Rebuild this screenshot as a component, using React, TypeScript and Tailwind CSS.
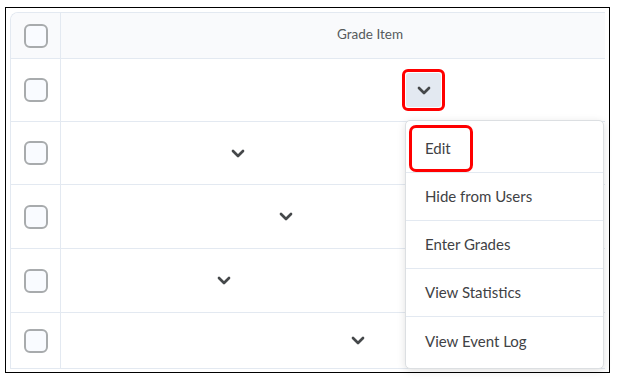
import React from "react";

const Chevron = () => (
  <svg width="14" height="9" viewBox="0 0 14 9" fill="none">
    <path d="M2 2l5 5 5-5" stroke="#45484a" strokeWidth="2.7" strokeLinecap="round" strokeLinejoin="round" />
  </svg>
);

const Checkbox = () => (
  <div className="w-[24px] h-[24px] rounded-[6px] border-2 border-[#a8abad] bg-[#f9fbff]" />
);

const rows = [
  { h: "h-[63px]", pad: "pl-[341px]", first: true },
  { h: "h-[63px]", pad: "pl-[170px]", first: false },
  { h: "h-[64px]", pad: "pl-[218px]", first: false },
  { h: "h-[64px]", pad: "pl-[156px]", first: false },
  { h: "h-[56px]", pad: "pl-[290px]", first: false },
];

const items = ["Edit", "Hide from Users", "Enter Grades", "View Statistics", "View Event Log"];

export default function App() {
  return (
    <div className="w-[617px] h-[383px] bg-white" style={{ fontFamily: "Lato, 'Open Sans', sans-serif" }}>
      <div className="relative ml-[5px] pt-[7px]">
        <div className="w-[605px] h-[366px] border border-black px-[4px] pt-[4px] overflow-hidden">
          <div className="w-[595px] border-t border-l border-[#e3e9f1] rounded-tl-[8px] overflow-hidden">
            <div className="flex h-[46px] bg-[#f9fafc] border-b border-[#e3e9f1]">
              <div className="w-[50px] flex items-center justify-center border-r border-[#e3e9f1]">
                <Checkbox />
              </div>
              <div className="flex-1 flex items-center pl-[276px] pb-[2px] text-[13.5px] text-[#565a5c]">Grade Item</div>
            </div>
            {rows.map((r, i) => (
              <div key={i} className={`flex ${r.h} border-b border-[#e3e9f1]`}>
                <div className="w-[50px] flex items-center justify-center border-r border-[#e3e9f1]">
                  <Checkbox />
                </div>
                <div className={`flex-1 flex items-center ${r.pad}`}>
                  {r.first ? (
                    <div className="w-[43px] h-[42px] border-[3px] border-[#ff0000] rounded-[6px] flex items-center justify-center">
                      <div className="w-[35px] h-[34px] bg-[#e3e9f1] rounded-[3px] flex items-center justify-center">
                        <Chevron />
                      </div>
                    </div>
                  ) : (
                    <Chevron />
                  )}
                </div>
              </div>
            ))}
          </div>
        </div>
        <div className="absolute left-[400px] top-[120px] w-[199px] h-[249px] bg-white border border-[#dcdfe2] rounded-[5px] shadow-[0_2px_8px_rgba(0,0,0,0.12)] flex flex-col pt-[4px]">
          {items.map((t, i) => (
            <div
              key={t}
              className={`h-[48px] shrink-0 flex items-center pl-[19px] text-[15px] text-[#3f4245] ${i < items.length - 1 ? "border-b border-[#e3e9f1]" : ""}`}
            >
              {i === 0 ? (
                <div className="-ml-[16px] w-[64px] h-[47px] border-[3px] border-[#ff0000] rounded-[7px] flex items-center pl-[13px]">
                  Edit
                </div>
              ) : (
                t
              )}
            </div>
          ))}
        </div>
      </div>
    </div>
  );
}
